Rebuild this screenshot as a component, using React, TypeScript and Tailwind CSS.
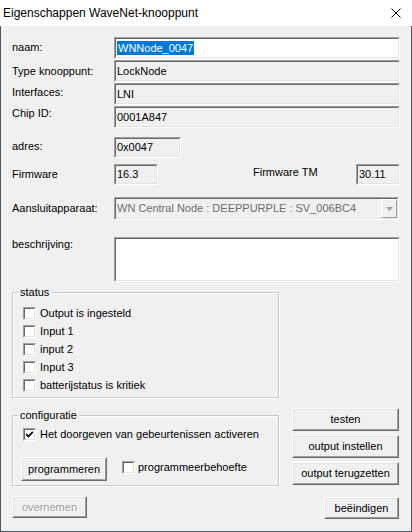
import type { ReactNode } from 'react';

const font = "font-['Liberation_Sans',Arial,sans-serif]";

function Field({ className, bg = 'bg-[#f0f0f0]', children }: { className: string; bg?: string; children?: ReactNode }) {
    return (
        <div className={`${className} ${bg} border border-t-[#a0a0a0] border-l-[#a0a0a0] border-b-white border-r-white`}>
            <div className="h-full border border-t-[#696969] border-l-[#696969] border-b-[#e3e3e3] border-r-[#e3e3e3] flex items-center pl-[1px] overflow-hidden whitespace-nowrap">
                {children}
            </div>
        </div>
    );
}

function Button({ className, disabled, children }: { className: string; disabled?: boolean; children: ReactNode }) {
    return (
        <div className={`${className} bg-[#f0f0f0] border border-t-white border-l-white border-b-[#696969] border-r-[#696969]`}>
            <div
                className={`h-full border border-t-[#e3e3e3] border-l-[#e3e3e3] border-b-[#a0a0a0] border-r-[#a0a0a0] flex items-center justify-center whitespace-nowrap ${
                    disabled ? 'text-[#a0a0a0] [text-shadow:1px_1px_0_#fff]' : 'text-black'
                }`}
            >
                {children}
            </div>
        </div>
    );
}

function CheckBox({ checked }: { checked?: boolean }) {
    return (
        <div className="w-[13px] h-[13px] shrink-0 bg-white border border-t-[#a0a0a0] border-l-[#a0a0a0] border-b-white border-r-white">
            <div className="h-full border border-t-[#696969] border-l-[#696969] border-b-[#e3e3e3] border-r-[#e3e3e3] flex items-center justify-center">
                {checked && (
                    <svg width="9" height="9" viewBox="0 0 9 9">
                        <polyline points="1.2,4.2 3.4,6.5 7.8,1.8" fill="none" stroke="#000" strokeWidth="1.7" />
                    </svg>
                )}
            </div>
        </div>
    );
}

function Group({ label, className, children }: { label: string; className: string; children: ReactNode }) {
    return (
        <div className={`relative border border-[#c8c8c8] [box-shadow:1px_1px_0_#fff,inset_1px_1px_0_#fff] ${className}`}>
            <span className="absolute left-[5px] -top-[7px] px-[2px] bg-[#f0f0f0] leading-[13px]">{label}</span>
            {children}
        </div>
    );
}

export default function App() {
    const statusItems = ['Output is ingesteld', 'Input 1', 'input 2', 'Input 3', 'batterijstatus is kritiek'];

    return (
        <div className={`${font} text-[11px] leading-[13px] text-black w-[412px] h-[532px] bg-[#f0f0f0] flex flex-col`}>
            <div className="h-[26px] bg-white flex items-center justify-between pl-[3px] pr-[11px] shrink-0">
                <span className="text-[12px] leading-[14px]">Eigenschappen WaveNet-knooppunt</span>
                <svg width="10" height="10" viewBox="0 0 10 10">
                    <path d="M0.5 0.5 L9.5 9.5 M9.5 0.5 L0.5 9.5" stroke="#000" strokeWidth="1" />
                </svg>
            </div>

            <div className="flex-1 border-x border-b border-[#4d5a66] pl-[11px] pr-[10px] pt-[11px]">
                <div className="flex h-[22px]">
                    <div className="w-[102px] pt-[4px]">naam:</div>
                    <Field className="w-[286px] h-[22px]" bg="bg-white">
                        <span className="bg-[#0078d7] text-white px-[1px] leading-[14px]">WNNode_0047</span>
                    </Field>
                </div>
                <div className="flex h-[22px] mt-[1px]">
                    <div className="w-[102px] pt-[5px]">Type knooppunt:</div>
                    <Field className="w-[286px] h-[22px]">LockNode</Field>
                </div>
                <div className="flex h-[22px] mt-[1px]">
                    <div className="w-[102px] pt-[3px]">Interfaces:</div>
                    <Field className="w-[286px] h-[22px]">LNI</Field>
                </div>
                <div className="flex h-[22px] mt-[1px]">
                    <div className="w-[102px] pt-[1px]">Chip ID:</div>
                    <Field className="w-[286px] h-[22px]">0001A847</Field>
                </div>

                <div className="flex h-[21px] mt-[9px]">
                    <div className="w-[102px] pt-[3px]">adres:</div>
                    <Field className="w-[67px] h-[21px]">0x0047</Field>
                </div>

                <div className="flex h-[21px] mt-[6px]">
                    <div className="w-[102px] pt-[4px]">Firmware</div>
                    <Field className="w-[44px] h-[21px]">16.3</Field>
                    <div className="ml-[95px] pt-[2px]">Firmware TM</div>
                    <Field className="w-[44px] h-[21px] ml-auto mr-[1px]">30.11</Field>
                </div>

                <div className="flex h-[23px] mt-[12px]">
                    <div className="w-[102px] pt-[5px]">Aansluitapparaat:</div>
                    <div className="w-[285px] h-[23px] bg-[#f0f0f0] border border-t-[#a0a0a0] border-l-[#a0a0a0] border-b-white border-r-white">
                        <div className="h-full border border-t-[#696969] border-l-[#696969] border-b-[#e3e3e3] border-r-[#e3e3e3] flex items-center">
                            <span className="flex-1 pl-[1px] text-[#6d6d6d] whitespace-nowrap overflow-hidden">
                                WN Central Node : DEEPPURPLE : SV_006BC4
                            </span>
                            <div className="w-[16px] h-[19px] border border-t-white border-l-white border-b-[#a0a0a0] border-r-[#a0a0a0] flex items-center justify-center">
                                <svg width="7" height="4" viewBox="0 0 7 4">
                                    <path d="M0 0 H7 L3.5 4 Z" fill="#a0a0a0" />
                                </svg>
                            </div>
                        </div>
                    </div>
                </div>

                <div className="flex h-[45px] mt-[17px]">
                    <div className="w-[102px] pt-[1px]">beschrijving:</div>
                    <Field className="w-[286px] h-[45px]" bg="bg-white" />
                </div>

                <Group label="status" className="w-[267px] mt-[10px] pt-[11px] pb-[3px] pl-[10px]">
                    {statusItems.map((item) => (
                        <div key={item} className="flex items-center h-[18px]">
                            <CheckBox />
                            <span className="ml-[4px]">{item}</span>
                        </div>
                    ))}
                </Group>

                <div className="flex items-start">
                    <div className="w-[267px]">
                        <Group label="configuratie" className="mt-[17px] pt-[9px] pb-[4px] pl-[8px]">
                            <div className="flex items-center h-[18px] pl-[2px]">
                                <CheckBox checked />
                                <span className="ml-[4px]">Het doorgeven van gebeurtenissen activeren</span>
                            </div>
                            <div className="flex items-center mt-[14px] h-[24px]">
                                <Button className="w-[86px] h-[24px]">programmeren</Button>
                                <div className="ml-[15px] mb-[3px]">
                                    <CheckBox />
                                </div>
                                <span className="ml-[3px] mb-[3px]">programmeerbehoefte</span>
                            </div>
                        </Group>
                        <Button className="w-[75px] h-[22px] mt-[10px]" disabled>
                            overnemen
                        </Button>
                    </div>

                    <div className="w-[107px] ml-[13px] mt-[10px] flex flex-col">
                        <Button className="w-[107px] h-[23px]">testen</Button>
                        <Button className="w-[107px] h-[23px] mt-[4px]">output instellen</Button>
                        <Button className="w-[107px] h-[23px] mt-[4px]">output terugzetten</Button>
                        <Button className="w-[75px] h-[22px] mt-[12px] self-end">beëindigen</Button>
                    </div>
                </div>
            </div>
        </div>
    );
}
